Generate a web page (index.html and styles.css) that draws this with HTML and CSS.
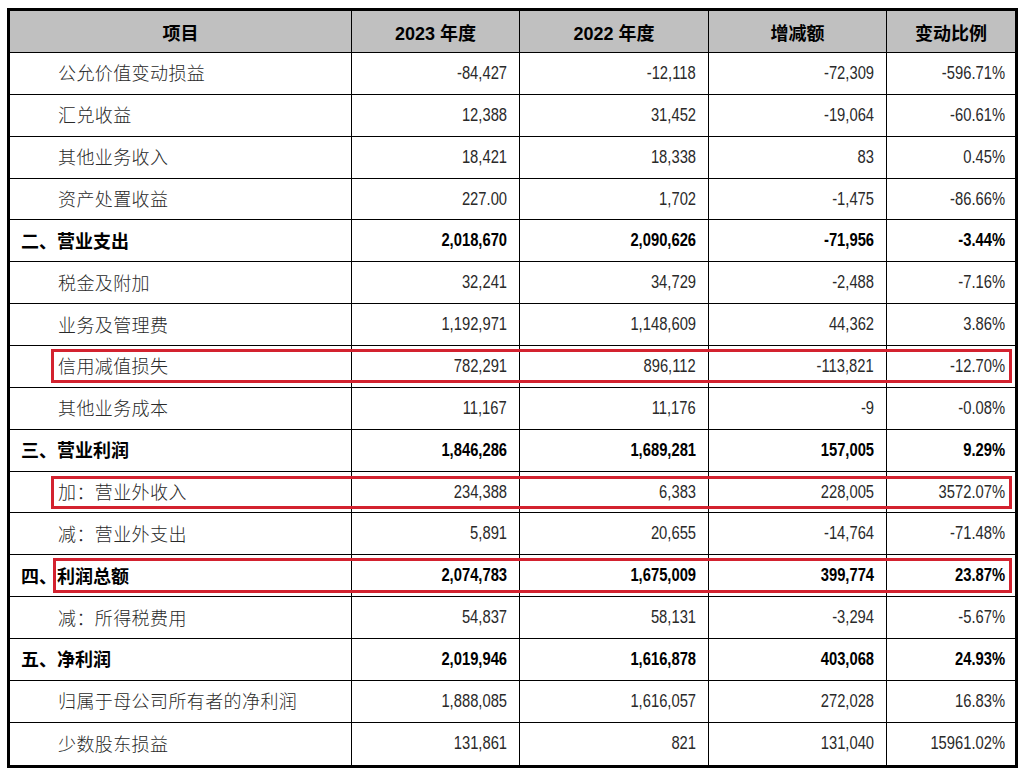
FILE: index.html
```html
<!DOCTYPE html>
<html lang="zh-CN">
<head>
<meta charset="utf-8">
<title>利润表</title>
<link rel="stylesheet" href="styles.css">
</head>
<body>
<div class="wrap">
  <div class="grid">
    <div class="c hd">项目</div>
    <div class="c hd">2023 年度</div>
    <div class="c hd">2022 年度</div>
    <div class="c hd">增减额</div>
    <div class="c hd last">变动比例</div>

    <div class="c item">公允价值变动损益</div><div class="c num"><span>-84,427</span></div><div class="c num"><span>-12,118</span></div><div class="c num"><span>-72,309</span></div><div class="c num last"><span>-596.71%</span></div>
    <div class="c item">汇兑收益</div><div class="c num"><span>12,388</span></div><div class="c num"><span>31,452</span></div><div class="c num"><span>-19,064</span></div><div class="c num last"><span>-60.61%</span></div>
    <div class="c item">其他业务收入</div><div class="c num"><span>18,421</span></div><div class="c num"><span>18,338</span></div><div class="c num"><span>83</span></div><div class="c num last"><span>0.45%</span></div>
    <div class="c item">资产处置收益</div><div class="c num"><span>227.00</span></div><div class="c num"><span>1,702</span></div><div class="c num"><span>-1,475</span></div><div class="c num last"><span>-86.66%</span></div>
    <div class="c item b">二、营业支出</div><div class="c num b"><span>2,018,670</span></div><div class="c num b"><span>2,090,626</span></div><div class="c num b"><span>-71,956</span></div><div class="c num b last"><span>-3.44%</span></div>
    <div class="c item">税金及附加</div><div class="c num"><span>32,241</span></div><div class="c num"><span>34,729</span></div><div class="c num"><span>-2,488</span></div><div class="c num last"><span>-7.16%</span></div>
    <div class="c item">业务及管理费</div><div class="c num"><span>1,192,971</span></div><div class="c num"><span>1,148,609</span></div><div class="c num"><span>44,362</span></div><div class="c num last"><span>3.86%</span></div>
    <div class="c item">信用减值损失</div><div class="c num"><span>782,291</span></div><div class="c num"><span>896,112</span></div><div class="c num"><span>-113,821</span></div><div class="c num last"><span>-12.70%</span></div>
    <div class="c item">其他业务成本</div><div class="c num"><span>11,167</span></div><div class="c num"><span>11,176</span></div><div class="c num"><span>-9</span></div><div class="c num last"><span>-0.08%</span></div>
    <div class="c item b">三、营业利润</div><div class="c num b"><span>1,846,286</span></div><div class="c num b"><span>1,689,281</span></div><div class="c num b"><span>157,005</span></div><div class="c num b last"><span>9.29%</span></div>
    <div class="c item">加：营业外收入</div><div class="c num"><span>234,388</span></div><div class="c num"><span>6,383</span></div><div class="c num"><span>228,005</span></div><div class="c num last"><span>3572.07%</span></div>
    <div class="c item">减：营业外支出</div><div class="c num"><span>5,891</span></div><div class="c num"><span>20,655</span></div><div class="c num"><span>-14,764</span></div><div class="c num last"><span>-71.48%</span></div>
    <div class="c item b">四、利润总额</div><div class="c num b"><span>2,074,783</span></div><div class="c num b"><span>1,675,009</span></div><div class="c num b"><span>399,774</span></div><div class="c num b last"><span>23.87%</span></div>
    <div class="c item">减：所得税费用</div><div class="c num"><span>54,837</span></div><div class="c num"><span>58,131</span></div><div class="c num"><span>-3,294</span></div><div class="c num last"><span>-5.67%</span></div>
    <div class="c item b">五、净利润</div><div class="c num b"><span>2,019,946</span></div><div class="c num b"><span>1,616,878</span></div><div class="c num b"><span>403,068</span></div><div class="c num b last"><span>24.93%</span></div>
    <div class="c item">归属于母公司所有者的净利润</div><div class="c num"><span>1,888,085</span></div><div class="c num"><span>1,616,057</span></div><div class="c num"><span>272,028</span></div><div class="c num last"><span>16.83%</span></div>
    <div class="c item bottom">少数股东损益</div><div class="c num bottom"><span>131,861</span></div><div class="c num bottom"><span>821</span></div><div class="c num bottom"><span>131,040</span></div><div class="c num last bottom"><span>15961.02%</span></div>
  </div>
  <div class="mark m1"></div>
  <div class="mark m2"></div>
  <div class="mark m3"></div>
</div>
</body>
</html>
```

FILE: styles.css
```css
html, body {
  margin: 0;
  padding: 0;
  background: #ffffff;
}

.wrap {
  position: relative;
  width: 1011px;
  margin: 8px 0 0 7px;
}

.grid {
  display: grid;
  grid-template-columns: 342px 168px 189px 178px 128px;
  grid-template-rows: 42px;
  grid-auto-rows: 41.86px;
  border: 3px solid #000;
  font-family: "Noto Sans CJK SC", "Liberation Sans", sans-serif;
  color: #2a2a2a;
}

.c {
  box-sizing: border-box;
  border-right: 1px solid #000;
  border-bottom: 1px solid #000;
  display: flex;
  align-items: center;
  white-space: nowrap;
  overflow: hidden;
}

.c.last {
  border-right: none;
}

.c.bottom {
  border-bottom: none;
}

.hd {
  background: #c0c0c0;
  justify-content: center;
  font-family: "Liberation Sans", "Noto Sans CJK SC", sans-serif;
  font-weight: 700;
  font-size: 18px;
  color: #000;
}

.item {
  padding-left: 48px;
  padding-bottom: 2px;
  font-size: 18px;
  font-weight: 300;
  letter-spacing: 0.4px;
}

.item.b {
  padding-left: 11px;
  font-weight: 700;
  color: #000;
  letter-spacing: 0;
}

.num {
  justify-content: flex-end;
  padding-right: 12px;
  font-family: "Liberation Sans", sans-serif;
  font-size: 18px;
}

.num span {
  display: inline-block;
  transform: scaleX(0.82);
  transform-origin: right center;
}

.num.last {
  padding-right: 10px;
}

.num.b {
  font-weight: 700;
  color: #000;
}

.mark {
  position: absolute;
  border: 3px solid #d3222f;
  box-sizing: border-box;
  pointer-events: none;
}

.m1 {
  left: 44px;
  top: 341px;
  width: 961px;
  height: 34px;
}

.m2 {
  left: 44px;
  top: 468px;
  width: 961px;
  height: 33px;
}

.m3 {
  left: 46px;
  top: 550px;
  width: 959px;
  height: 35px;
}
```
